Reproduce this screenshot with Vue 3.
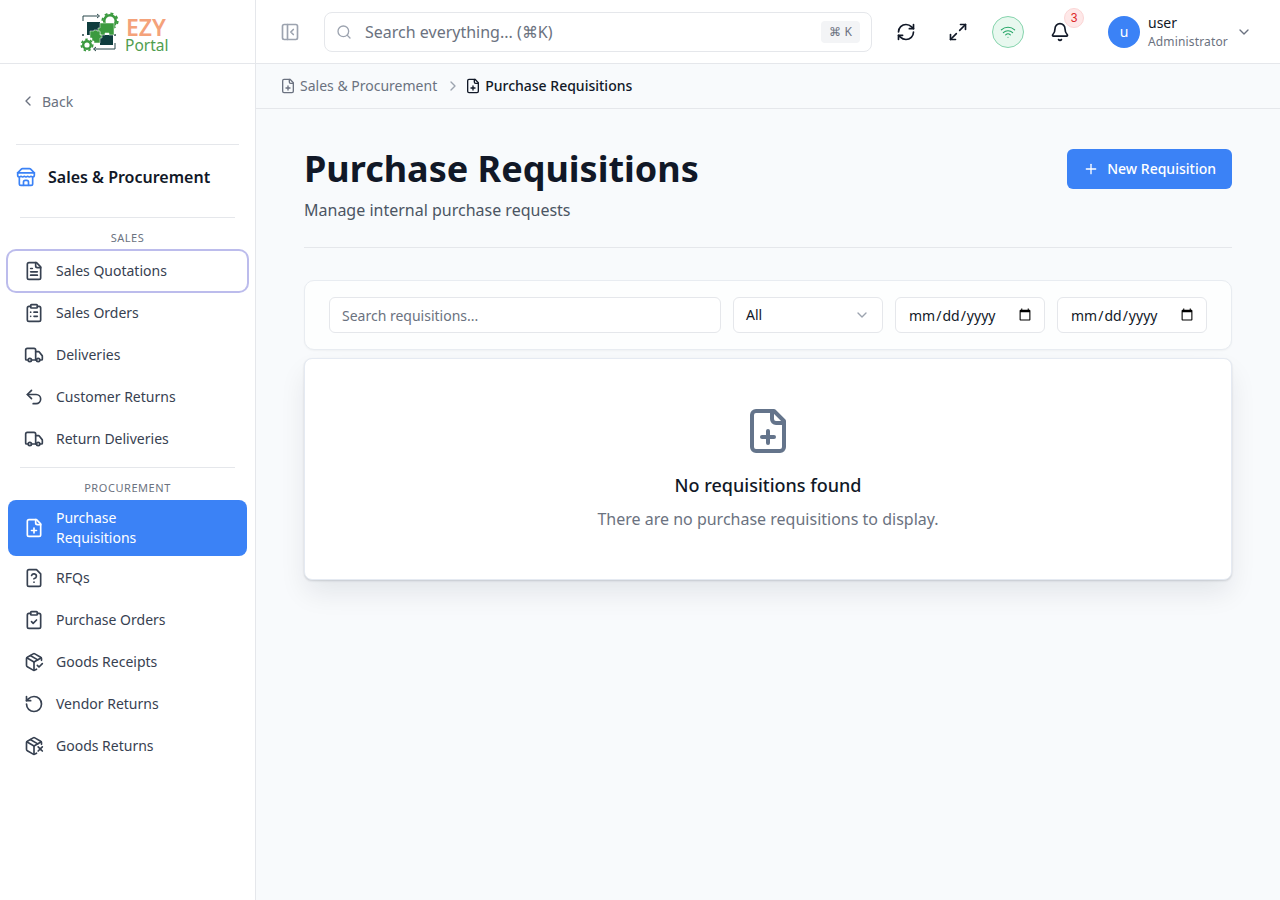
<script setup>
const icons = {
  fileText: ["M15 2H6a2 2 0 0 0-2 2v16a2 2 0 0 0 2 2h12a2 2 0 0 0 2-2V7Z", "M14 2v4a2 2 0 0 0 2 2h4", "M10 9H8", "M16 13H8", "M16 17H8"],
  clipboardList: ["M9 2h6a1 1 0 0 1 1 1v2a1 1 0 0 1-1 1H9a1 1 0 0 1-1-1V3a1 1 0 0 1 1-1z", "M16 4h2a2 2 0 0 1 2 2v14a2 2 0 0 1-2 2H6a2 2 0 0 1-2-2V6a2 2 0 0 1 2-2h2", "M12 11h4", "M12 16h4", "M8 11h.01", "M8 16h.01"],
  truck: ["M14 18V6a2 2 0 0 0-2-2H4a2 2 0 0 0-2 2v11a1 1 0 0 0 1 1h2", "M15 18H9", "M19 18h2a1 1 0 0 0 1-1v-3.65a1 1 0 0 0-.22-.624l-3.48-4.35A1 1 0 0 0 17.52 8H14", "M19 18a2 2 0 1 1-4 0a2 2 0 1 1 4 0", "M9 18a2 2 0 1 1-4 0a2 2 0 1 1 4 0"],
  undo: ["M9 14 4 9l5-5", "M4 9h10.5a5.5 5.5 0 0 1 5.5 5.5a5.5 5.5 0 0 1-5.5 5.5H11"],
  filePlus: ["M15 2H6a2 2 0 0 0-2 2v16a2 2 0 0 0 2 2h12a2 2 0 0 0 2-2V7Z", "M14 2v4a2 2 0 0 0 2 2h4", "M9 15h6", "M12 18v-6"],
  fileQuestion: ["M15 2H6a2 2 0 0 0-2 2v16a2 2 0 0 0 2 2h12a2 2 0 0 0 2-2V7Z", "M12 17h.01", "M9.1 9a3 3 0 0 1 5.82 1c0 2-3 3-3 3"],
  clipboardCheck: ["M9 2h6a1 1 0 0 1 1 1v2a1 1 0 0 1-1 1H9a1 1 0 0 1-1-1V3a1 1 0 0 1 1-1z", "M16 4h2a2 2 0 0 1 2 2v14a2 2 0 0 1-2 2H6a2 2 0 0 1-2-2V6a2 2 0 0 1 2-2h2", "m9 14 2 2 4-4"],
  packageCheck: ["m16 16 2 2 4-4", "M21 10V8a2 2 0 0 0-1-1.73l-7-4a2 2 0 0 0-2 0l-7 4A2 2 0 0 0 3 8v8a2 2 0 0 0 1 1.73l7 4a2 2 0 0 0 2 0l2-1.14", "m7.5 4.27 9 5.15", "M3.29 7 12 12l8.71-5", "M12 22V12"],
  rotate: ["M3 12a9 9 0 1 0 9-9 9.75 9.75 0 0 0-6.74 2.74L3 8", "M3 3v5h5"],
  packageX: ["M21 10V8a2 2 0 0 0-1-1.73l-7-4a2 2 0 0 0-2 0l-7 4A2 2 0 0 0 3 8v8a2 2 0 0 0 1 1.73l7 4a2 2 0 0 0 2 0l2-1.14", "m7.5 4.27 9 5.15", "M3.29 7 12 12l8.71-5", "M12 22V12", "m17 13 5 5m-5 0 5-5"],
  store: ["m2 7 4.41-4.41A2 2 0 0 1 7.83 2h8.34a2 2 0 0 1 1.42.59L22 7", "M4 12v8a2 2 0 0 0 2 2h12a2 2 0 0 0 2-2v-8", "M15 22v-4a2 2 0 0 0-2-2h-2a2 2 0 0 0-2 2v4", "M2 7h20", "M22 7v3a2 2 0 0 1-2 2a2.7 2.7 0 0 1-1.59-.63.7.7 0 0 0-.82 0A2.7 2.7 0 0 1 16 12a2.7 2.7 0 0 1-1.59-.63.7.7 0 0 0-.82 0A2.7 2.7 0 0 1 12 12a2.7 2.7 0 0 1-1.59-.63.7.7 0 0 0-.82 0A2.7 2.7 0 0 1 8 12a2.7 2.7 0 0 1-1.59-.63.7.7 0 0 0-.82 0A2.7 2.7 0 0 1 4 12a2 2 0 0 1-2-2V7"],
  panel: ["M5 3h14a2 2 0 0 1 2 2v14a2 2 0 0 1-2 2H5a2 2 0 0 1-2-2V5a2 2 0 0 1 2-2z", "M9 3v18", "m16 15-3-3 3-3"],
  search: ["m21 21-4.34-4.34", "M19 11a8 8 0 1 1-16 0a8 8 0 1 1 16 0"],
  refresh: ["M3 12a9 9 0 0 1 9-9 9.75 9.75 0 0 1 6.74 2.74L21 8", "M21 3v5h-5", "M21 12a9 9 0 0 1-9 9 9.75 9.75 0 0 1-6.74-2.74L3 16", "M8 16H3v5"],
  expand: ["M15 3h6v6", "m21 3-7 7", "m3 21 7-7", "M9 21H3v-6"],
  wifi: ["M12 20h.01", "M2 8.82a15 15 0 0 1 20 0", "M5 12.859a10 10 0 0 1 14 0", "M8.5 16.429a5 5 0 0 1 7 0"],
  bell: ["M10.268 21a2 2 0 0 0 3.464 0", "M3.262 15.326A1 1 0 0 0 4 17h16a1 1 0 0 0 .74-1.673C19.41 13.956 18 12.499 18 8A6 6 0 0 0 6 8c0 4.499-1.411 5.956-2.738 7.326"],
  chevronLeft: ["m15 18-6-6 6-6"],
  chevronRight: ["m9 18 6-6-6-6"],
  chevronDown: ["m6 9 6 6 6-6"],
  plus: ["M5 12h14", "M12 5v14"],
};

const salesItems = [
  { label: "Sales Quotations", icon: "fileText", focused: true },
  { label: "Sales Orders", icon: "clipboardList" },
  { label: "Deliveries", icon: "truck" },
  { label: "Customer Returns", icon: "undo" },
  { label: "Return Deliveries", icon: "truck" },
];

const procurementItems = [
  { label: "Purchase Requisitions", icon: "filePlus", active: true },
  { label: "RFQs", icon: "fileQuestion" },
  { label: "Purchase Orders", icon: "clipboardCheck" },
  { label: "Goods Receipts", icon: "packageCheck" },
  { label: "Vendor Returns", icon: "rotate" },
  { label: "Goods Returns", icon: "packageX" },
];

const sections = [
  { title: "Sales", items: salesItems },
  { title: "Procurement", items: procurementItems },
];
</script>

<template>
  <div class="app">
    <aside class="sidebar">
      <div class="logo">
        <svg width="90" height="48" viewBox="0 0 90 48" fill="none">
          <path d="M4 9V4h15M36 31v6H15" stroke="#28474a" stroke-width="1" />
          <path d="M18 2l2.5 2-2.5 2M17 35l-2.5 2 2.5 2" stroke="#28474a" stroke-width="1" />
          <circle cx="4" cy="23" r="1" fill="#28474a" />
          <circle cx="36" cy="23" r="1" fill="#28474a" />
          <circle cx="31" cy="9" r="5.8" fill="#fff" stroke="#3b9a3f" stroke-width="2.6" />
          <circle cx="31" cy="9" r="7.6" stroke="#3b9a3f" stroke-width="2" stroke-dasharray="3 3" />
          <path d="M8 10h13v13H8z" fill="#0f3d3e" />
          <path d="M21 23h13v10H21z" fill="#0f3d3e" />
          <path d="M21 11h14v12h-5v-2h-4v2h-5v-3h-2v-4h2z" fill="#3b9a3f" stroke="#fff" stroke-width="0.5" />
          <path d="M11 19h4v-1h3v1h3v4h2v3h-2v5h-6v-2h-2v-3h-2z" fill="#3b9a3f" stroke="#fff" stroke-width="0.5" />
          <circle cx="8" cy="33" r="3.8" fill="#fff" stroke="#3b9a3f" stroke-width="2.4" />
          <circle cx="8" cy="33" r="5.6" stroke="#3b9a3f" stroke-width="1.8" stroke-dasharray="2.4 2.4" />
          <text class="logo__ezy" x="47" y="24">EZY</text>
          <text class="logo__portal" x="46" y="39">Portal</text>
        </svg>
      </div>

      <div class="sidebar__body">
        <a class="back">
          <svg class="icon icon--16" viewBox="0 0 24 24">
            <path v-for="d in icons.chevronLeft" :key="d" :d="d" />
          </svg>
          Back
        </a>

        <div class="module">
          <svg class="icon icon--20 module__icon" viewBox="0 0 24 24">
            <path v-for="d in icons.store" :key="d" :d="d" />
          </svg>
          <span>Sales &amp; Procurement</span>
        </div>

        <nav class="nav">
          <section v-for="section in sections" :key="section.title" class="nav__section">
            <div class="nav__title">{{ section.title }}</div>
            <ul class="nav__list">
              <li
                v-for="item in section.items"
                :key="item.label"
                :class="['nav__item', { 'nav__item--active': item.active, 'nav__item--focused': item.focused }]"
              >
                <svg class="icon icon--20" viewBox="0 0 24 24">
                  <path v-for="d in icons[item.icon]" :key="d" :d="d" />
                </svg>
                <span class="nav__label">{{ item.label }}</span>
              </li>
            </ul>
          </section>
        </nav>
      </div>
    </aside>

    <div class="content">
      <header class="topbar">
        <button class="topbar__btn topbar__btn--muted">
          <svg class="icon icon--20" viewBox="0 0 24 24">
            <path v-for="d in icons.panel" :key="d" :d="d" />
          </svg>
        </button>

        <div class="search">
          <svg class="icon icon--16" viewBox="0 0 24 24">
            <path v-for="d in icons.search" :key="d" :d="d" />
          </svg>
          <span class="search__text">Search everything... (⌘K)</span>
          <kbd class="search__kbd">⌘ K</kbd>
        </div>

        <button class="topbar__btn">
          <svg class="icon icon--20" viewBox="0 0 24 24">
            <path v-for="d in icons.refresh" :key="d" :d="d" />
          </svg>
        </button>
        <button class="topbar__btn">
          <svg class="icon icon--20" viewBox="0 0 24 24">
            <path v-for="d in icons.expand" :key="d" :d="d" />
          </svg>
        </button>
        <div class="wifi">
          <svg class="icon icon--16" viewBox="0 0 24 24">
            <path v-for="d in icons.wifi" :key="d" :d="d" />
          </svg>
        </div>
        <button class="topbar__btn topbar__btn--bell">
          <svg class="icon icon--20" viewBox="0 0 24 24">
            <path v-for="d in icons.bell" :key="d" :d="d" />
          </svg>
          <span class="badge">3</span>
        </button>

        <div class="user">
          <span class="user__avatar">u</span>
          <div class="user__info">
            <span class="user__name">user</span>
            <span class="user__role">Administrator</span>
          </div>
          <svg class="icon icon--16 user__chevron" viewBox="0 0 24 24">
            <path v-for="d in icons.chevronDown" :key="d" :d="d" />
          </svg>
        </div>
      </header>

      <div class="crumbs">
        <span class="crumbs__item">
          <svg class="icon icon--16" viewBox="0 0 24 24">
            <path v-for="d in icons.filePlus" :key="d" :d="d" />
          </svg>
          <span class="crumbs__text">Sales &amp; Procurement</span>
        </span>
        <svg class="icon icon--16 crumbs__sep" viewBox="0 0 24 24">
          <path v-for="d in icons.chevronRight" :key="d" :d="d" />
        </svg>
        <span class="crumbs__item crumbs__item--current">
          <svg class="icon icon--16" viewBox="0 0 24 24">
            <path v-for="d in icons.filePlus" :key="d" :d="d" />
          </svg>
          <span class="crumbs__text">Purchase Requisitions</span>
        </span>
      </div>

      <main class="page">
        <div class="page__head">
          <div>
            <h1 class="page__title">Purchase Requisitions</h1>
            <p class="page__sub">Manage internal purchase requests</p>
          </div>
          <button class="primary">
            <svg class="icon icon--16" viewBox="0 0 24 24">
              <path v-for="d in icons.plus" :key="d" :d="d" />
            </svg>
            <span class="primary__text">New Requisition</span>
          </button>
        </div>

        <div class="filters">
          <input class="field field--search" type="text" placeholder="Search requisitions..." />
          <div class="select">
            <span class="select__value">All</span>
            <svg class="icon icon--16" viewBox="0 0 24 24">
              <path v-for="d in icons.chevronDown" :key="d" :d="d" />
            </svg>
          </div>
          <input class="field field--date" type="date" />
          <input class="field field--date" type="date" />
        </div>

        <div class="empty">
          <svg class="empty__icon" width="48" height="48" viewBox="0 0 24 24">
            <path v-for="d in icons.filePlus" :key="d" :d="d" />
          </svg>
          <h3 class="empty__title">No requisitions found</h3>
          <p class="empty__text">There are no purchase requisitions to display.</p>
        </div>
      </main>
    </div>
  </div>
</template>

<style>
html,
body {
  margin: 0;
  background: #f8fafc;
}
</style>

<style scoped>
* {
  box-sizing: border-box;
}

.app {
  display: flex;
  min-height: 900px;
  font-family: "Noto Sans", sans-serif;
  font-size: 14px;
  color: #111827;
}

.icon {
  flex: none;
  fill: none;
  stroke: currentColor;
  stroke-width: 2;
  stroke-linecap: round;
  stroke-linejoin: round;
}

.icon--16 {
  width: 16px;
  height: 16px;
}

.icon--20 {
  width: 20px;
  height: 20px;
}

/* sidebar */
.sidebar {
  width: 256px;
  flex: none;
  background: #fff;
  border-right: 1px solid #e5e7eb;
}

.logo {
  height: 64px;
  display: flex;
  align-items: center;
  justify-content: center;
  padding: 8px 7px 0 0;
  border-bottom: 1px solid #e5e7eb;
}

.logo__ezy {
  font-size: 23px;
  font-weight: 600;
  fill: #f4a27a;
}

.logo__portal {
  font-size: 15.5px;
  fill: #4f9d4f;
}

.sidebar__body {
  padding: 0 8px;
}

.back {
  display: flex;
  align-items: center;
  gap: 6px;
  height: 40px;
  margin-top: 17px;
  padding-left: 12px;
  color: #6b7280;
}

.module {
  display: flex;
  align-items: center;
  gap: 12px;
  height: 73px;
  margin: 23px 8px 0;
  padding-bottom: 9px;
  border-top: 1px solid #e5e7eb;
  font-size: 16px;
  font-weight: 600;
}

.module__icon {
  color: #3b82f6;
}

.nav__title {
  height: 34px;
  margin: 0 12px;
  padding-top: 12px;
  border-top: 1px solid #e5e7eb;
  font-size: 11px;
  line-height: 16px;
  letter-spacing: 0.55px;
  text-align: center;
  text-transform: uppercase;
  color: #6b7280;
}

.nav__section + .nav__section .nav__title {
  height: 33px;
}

.nav__list {
  list-style: none;
  margin: 0;
  padding: 0 0 8px;
  display: flex;
  flex-direction: column;
  gap: 2px;
}

.nav__item {
  display: flex;
  align-items: center;
  gap: 12px;
  min-height: 40px;
  padding: 8px 16px;
  border-radius: 8px;
  line-height: 20px;
  color: #374151;
}

.nav__label {
  max-width: 140px;
}

.nav__item--active {
  background: #3b82f6;
  color: #fff;
}

.nav__item--focused {
  box-shadow: 0 0 0 2px #bcbcec;
}

/* topbar */
.content {
  flex: 1;
  min-width: 0;
}

.topbar {
  height: 64px;
  display: flex;
  align-items: center;
  gap: 16px;
  padding: 0 16px;
  background: #fff;
  border-bottom: 1px solid #e5e7eb;
}

.topbar__btn {
  position: relative;
  width: 36px;
  height: 36px;
  flex: none;
  display: flex;
  align-items: center;
  justify-content: center;
  padding: 0;
  border: 0;
  background: none;
  color: #111827;
}

.topbar__btn--muted {
  color: #9ca3af;
}

.topbar__btn--bell {
  width: 40px;
}

.search {
  flex: 1;
  height: 40px;
  display: flex;
  align-items: center;
  gap: 12px;
  padding: 0 11px;
  border: 1px solid #e5e7eb;
  border-radius: 8px;
  color: #9ca3af;
  font-size: 16px;
}

.search__text {
  flex: 1;
  margin-left: 1px;
  color: #6b7280;
}

.search__kbd {
  padding: 0 8px;
  height: 22px;
  line-height: 22px;
  border-radius: 4px;
  background: #f3f4f6;
  font-family: inherit;
  font-size: 12px;
  color: #6b7280;
}

.wifi {
  width: 32px;
  height: 32px;
  flex: none;
  display: flex;
  align-items: center;
  justify-content: center;
  border: 1px solid #86d4ad;
  border-radius: 50%;
  background: #e8f8ef;
  color: #22a565;
}

.wifi .icon {
  stroke-width: 1.6;
}

.badge {
  position: absolute;
  top: -6px;
  right: -4px;
  width: 20px;
  height: 20px;
  border-radius: 50%;
  background: #fee8e8;
  border: 1px solid #fbd5d5;
  font-size: 12px;
  line-height: 18px;
  text-align: center;
  color: #dc2626;
}

.user {
  display: flex;
  align-items: center;
  gap: 8px;
  padding: 0 12px;
  flex: none;
}

.user__avatar {
  width: 32px;
  height: 32px;
  border-radius: 50%;
  background: #3b82f6;
  color: #fff;
  text-align: center;
  line-height: 32px;
}

.user__info {
  width: 80px;
  display: flex;
  flex-direction: column;
  padding-top: 1px;
}

.user__name {
  font-size: 14px;
  line-height: 18px;
  color: #111827;
}

.user__role {
  margin-top: 1px;
  font-size: 12px;
  line-height: 18px;
  letter-spacing: 0.15px;
  color: #6b7280;
}

.user__chevron {
  color: #6b7280;
}

/* breadcrumb */
.crumbs {
  height: 45px;
  display: flex;
  align-items: center;
  gap: 8px;
  padding: 0 24px;
  border-bottom: 1px solid #e5e7eb;
  color: #6b7280;
}

.crumbs__item {
  display: flex;
  align-items: center;
  gap: 4px;
}

.crumbs__text {
  margin-bottom: 2px;
}

.crumbs__item--current {
  color: #111827;
  font-weight: 500;
}

.crumbs__sep {
  margin-right: -4px;
  color: #9ca3af;
}

/* page */
.page {
  padding: 40px 48px;
}

.page__head {
  display: flex;
  justify-content: space-between;
  align-items: flex-start;
  padding-bottom: 25px;
  margin-bottom: 32px;
  border-bottom: 1px solid #e5e7eb;
}

.page__title {
  margin: 0;
  font-size: 36px;
  line-height: 40px;
  font-weight: 700;
  color: #111827;
}

.page__sub {
  margin: 9px 0 0;
  font-size: 16px;
  line-height: 24px;
  color: #4b5563;
}

.primary {
  height: 40px;
  display: flex;
  align-items: center;
  gap: 8px;
  padding: 0 16px;
  border: 0;
  border-radius: 6px;
  background: #3b82f6;
  color: #fff;
  font-family: inherit;
  font-size: 14px;
  font-weight: 500;
}

.primary__text {
  margin-bottom: 2px;
}

.filters {
  display: flex;
  gap: 12px;
  padding: 16px 24px;
  background: #fdfefe;
  border: 1px solid #e8ecf1;
  border-radius: 10px;
  box-shadow: 0 1px 2px rgba(0, 0, 0, 0.04);
}

.field,
.select {
  height: 36px;
  padding: 0 12px;
  border: 1px solid #e5e7eb;
  border-radius: 6px;
  background: #fff;
  font-family: inherit;
  font-size: 14px;
  color: #111827;
  outline: none;
}

.field--search {
  flex: 1;
  min-width: 0;
}

.field--search::placeholder {
  color: #6b7280;
  opacity: 1;
}

.field--date {
  width: 150px;
  flex: none;
  padding-right: 10px;
}

.select {
  width: 150px;
  flex: none;
  display: flex;
  align-items: center;
  justify-content: space-between;
}

.select__value {
  margin-bottom: 2px;
}

.select .icon {
  color: #9ca3af;
}

.empty {
  margin-top: 8px;
  padding: 48px;
  display: flex;
  flex-direction: column;
  align-items: center;
  background: #fff;
  border: 1px solid #e5eaf2;
  border-radius: 8px;
  box-shadow: 0 1px 2px rgba(15, 23, 42, 0.15), 0 14px 28px -2px rgba(15, 23, 42, 0.09);
}

.empty__icon {
  fill: none;
  stroke: #64748b;
  stroke-width: 2;
  stroke-linecap: round;
  stroke-linejoin: round;
}

.empty__title {
  margin: 16px 0 0;
  font-size: 18px;
  line-height: 28px;
  font-weight: 500;
  color: #111827;
}

.empty__text {
  margin: 8px 0 0;
  font-size: 16px;
  line-height: 24px;
  color: #6b7280;
}
</style>
